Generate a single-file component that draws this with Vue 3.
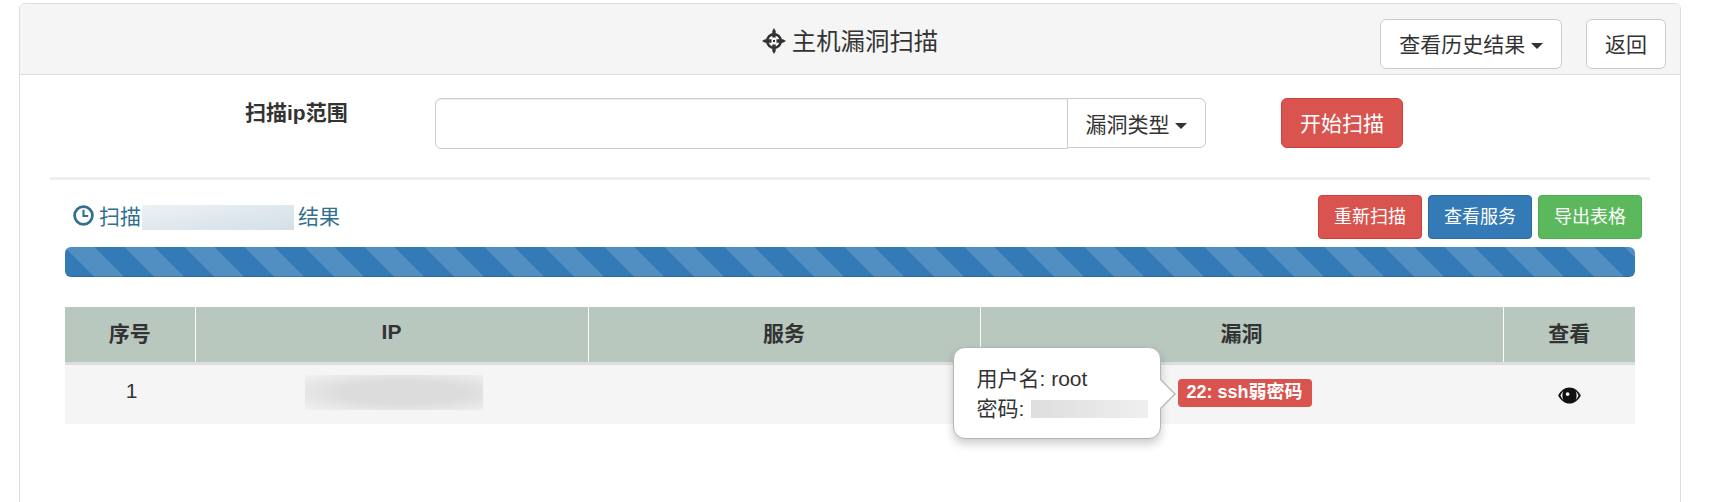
<script setup>
const columns = [
  { key: 'no', label: '序号' },
  { key: 'ip', label: 'IP' },
  { key: 'svc', label: '服务' },
  { key: 'vuln', label: '漏洞' },
  { key: 'view', label: '查看' },
]
</script>

<template>
  <div class="page">
    <section class="panel">
      <header class="panel-head">
        <h1 class="title">
          <svg class="crosshair" viewBox="0 0 24 26" aria-hidden="true">
            <circle cx="12" cy="13" r="6.800" fill="none" stroke="#333" stroke-width="2.600"/>
            <path d="M12 0l1.700 3v6.500h-3.400V3zM12 26l-1.700-3v-6.500h3.400V23zM0 13l3-1.700h6.500v3.400H3zM24 13l-3 1.700h-6.500v-3.400H21z" fill="#333"/>
            <rect x="11" y="12" width="2" height="2" fill="#333"/>
          </svg>
          <span>主机漏洞扫描</span>
        </h1>
        <div class="head-actions">
          <button class="btn btn-default">查看历史结果 <i class="caret"></i></button>
          <button class="btn btn-default">返回</button>
        </div>
      </header>

      <div class="panel-body">
        <form class="scan-form" @submit.prevent>
          <label class="scan-label">扫描ip范围</label>
          <div class="input-group">
            <input class="scan-input" type="text" />
            <button class="addon">漏洞类型 <i class="caret"></i></button>
          </div>
          <button class="btn btn-danger start">开始扫描</button>
        </form>

        <hr class="divider" />

        <div class="result-head">
          <div class="result-title">
            <svg class="clock" viewBox="0 0 20 20" aria-hidden="true">
              <circle cx="10" cy="10" r="8.500" fill="none" stroke="currentColor" stroke-width="2.600"/>
              <path d="M10 4.500v6h4.500" fill="none" stroke="currentColor" stroke-width="2"/>
            </svg>
            <span class="rt">扫描</span><span class="blur-host"></span><span class="rt">结果</span>
          </div>
          <div class="result-actions">
            <button class="btn btn-sm btn-danger">重新扫描</button>
            <button class="btn btn-sm btn-primary">查看服务</button>
            <button class="btn btn-sm btn-success">导出表格</button>
          </div>
        </div>

        <div class="progress"></div>

        <table class="grid">
          <thead>
            <tr>
              <th v-for="c in columns" :key="c.key" :class="'col-' + c.key">{{ c.label }}</th>
            </tr>
          </thead>
          <tbody>
            <tr>
              <td class="no-cell">1</td>
              <td><span class="blur-ip"></span></td>
              <td></td>
              <td class="vuln-cell">
                <span class="label-anchor">
                  <span class="vuln-label">22: ssh弱密码</span>
                  <div class="popover">
                    <div>用户名: root</div>
                    <div class="pw">密码: <span class="blur-pw"></span></div>
                    <i class="arrow"></i>
                  </div>
                </span>
              </td>
              <td>
                <svg class="eye" viewBox="0 0 24 18" aria-hidden="true">
                  <path fill-rule="evenodd" d="M12 .5C6.800.5 2.600 4 0 9c2.600 5 6.800 8.500 12 8.500S21.400 14 24 9C21.400 4 17.200.5 12 .5zM5.500 4.200A8 8 0 0 0 4.500 9a8 8 0 0 0 1 4.600C4.200 12.600 3.200 11 2.400 9c.8-2 1.800-3.700 3.100-4.800zM18.500 4.200C19.800 5.300 20.800 7 21.600 9c-.8 2-1.800 3.600-3.100 4.600a8 8 0 0 0 1-4.600 8 8 0 0 0-1-4.800zM10 5.500a2 2 0 1 0 0 4 2 2 0 0 0 0-4z" fill="#111"/>
                </svg>
              </td>
            </tr>
          </tbody>
        </table>
      </div>
    </section>
  </div>
</template>

<style>
html, body { margin: 0; height: 502px; overflow: hidden; background: #fff; }
</style>

<style scoped>
.page {
  box-sizing: border-box;
  height: 502px;
  overflow: hidden;
  padding: 3px 30px 0 19px;
  font-family: "Liberation Sans", "Noto Sans CJK SC", sans-serif;
  font-size: 21px;
  color: #333;
}
.panel {
  box-sizing: border-box;
  height: 540px;
  border: 1px solid #ddd;
  border-radius: 6px;
  background: #fff;
}
.panel-head {
  position: relative;
  box-sizing: border-box;
  height: 71px;
  display: flex;
  align-items: center;
  justify-content: center;
  background: #f5f5f5;
  border-bottom: 1px solid #ddd;
  border-radius: 5px 5px 0 0;
}
.title {
  margin: 6px 0 0;
  display: flex;
  align-items: center;
  gap: 6px;
  font-size: 24.400px;
  font-weight: 400;
  line-height: 30px;
}
.crosshair { width: 24px; height: 26px; margin-top: -2px; }
.head-actions {
  position: absolute;
  right: 14px;
  top: 15px;
  display: flex;
  gap: 24px;
}
.btn {
  box-sizing: border-box;
  height: 50px;
  padding: 0 18px;
  border: 1px solid #ccc;
  border-radius: 6px;
  font: inherit;
  font-size: 21px;
  line-height: 1;
  white-space: nowrap;
  color: #333;
  background: #fff;
}
.btn-danger { background: #d9534f; border-color: #d43f3a; color: #fff; }
.btn-primary { background: #337ab7; border-color: #2e6da4; color: #fff; }
.btn-success { background: #5cb85c; border-color: #4cae4c; color: #fff; }
.btn-sm {
  width: 104px;
  height: 44px;
  padding: 0;
  font-size: 18px;
  border-radius: 4px;
}
.caret {
  display: inline-block;
  width: 0;
  height: 0;
  vertical-align: middle;
  border-top: 6px solid #333;
  border-left: 6px solid transparent;
  border-right: 6px solid transparent;
}
.panel-body {
  padding: 23px 45px 0 26px;
}
.scan-form {
  display: grid;
  grid-template-columns: 389px 771px 197px;
  align-items: start;
}
.scan-form .start { width: 122px; margin-left: 75px; padding: 0; }
.scan-label {
  padding: 0 0 0 199px;
  font-weight: 700;
  line-height: 30px;
}
.input-group {
  display: flex;
  height: 51px;
  box-sizing: border-box;
}
.scan-input {
  box-sizing: border-box;
  flex: 1;
  min-width: 0;
  height: 51px;
  padding: 0 16px;
  border: 1px solid #ccc;
  border-radius: 6px 0 0 6px;
  outline: none;
  box-shadow: inset 0 1px 1px rgba(0, 0, 0, .075);
}
.addon {
  box-sizing: border-box;
  width: 139px;
  height: 50px;
  margin-left: -1px;
  padding: 0;
  border: 1px solid #ccc;
  border-radius: 0 6px 6px 0;
  background: #fff;
  font: inherit;
  color: #333;
  white-space: nowrap;
}
.divider {
  height: 0;
  margin: 28px -15px 0 4px;
  border: 0;
  border-top: 3px solid #eee;
}
.result-head {
  display: flex;
  align-items: center;
  justify-content: space-between;
  margin: 15px 0 8px;
  padding-left: 27px;
  height: 44px;
}
.result-title {
  display: flex;
  align-items: center;
  color: #31708f;
  font-size: 21px;
  height: 44px;
}
.rt { position: relative; top: -2px; }
.clock { width: 21px; height: 21px; margin-right: 5px; margin-top: -4px; }
.blur-host {
  width: 152px;
  height: 25px;
  margin: 0 4px 0 1px;
  background: linear-gradient(170deg, #edf1f4, #d3dfe8);
}
.result-actions {
  display: flex;
  gap: 6px;
  margin-right: -7px;
}
.progress {
  height: 30px;
  margin-left: 19px;
  border-radius: 6px;
  background-color: #337ab7;
  background-image: linear-gradient(45deg,
    rgba(255,255,255,.15) 25%, transparent 25%,
    transparent 50%, rgba(255,255,255,.15) 50%,
    rgba(255,255,255,.15) 75%, transparent 75%, transparent);
  background-size: 60px 60px;
  box-shadow: inset 0 -1px 0 rgba(0,0,0,.15);
}
.grid {
  width: 1570px;
  margin: 30px 0 0 19px;
  border-collapse: collapse;
  table-layout: fixed;
}
.grid th {
  box-sizing: border-box;
  height: 56px;
  padding: 0 0 5px;
  background: #b8c8be;
  border-bottom: 3px solid #ddd;
  border-left: 1px solid #fff;
  font-size: 21px;
  font-weight: 700;
  text-align: center;
}
.grid th:first-child { border-left: 0; }
.col-no { width: 130px; }
.col-ip { width: 393px; }
.col-svc { width: 392px; }
.col-vuln { width: 523px; }
.col-view { width: 132px; }
.grid td {
  box-sizing: border-box;
  height: 61px;
  padding: 0;
  background: #f5f5f5;
  text-align: center;
  vertical-align: middle;
}
.grid td.no-cell { padding: 0 0 6px 3px; }
.blur-ip {
  display: block;
  width: 178px;
  height: 35px;
  margin: 0 auto;
  transform: translate(2px, -2px);
  background: radial-gradient(ellipse at 55% 50%, #dcdcdc 45%, #f1f1f1 100%);
}
.vuln-cell { position: relative; }
.label-anchor {
  position: relative;
  display: inline-block;
  left: 3px;
  top: -1px;
  vertical-align: middle;
}
.vuln-label {
  display: block;
  box-sizing: border-box;
  width: 134px;
  height: 28px;
  line-height: 26px;
  border-radius: 4px;
  background: #d9534f;
  color: #fff;
  font-size: 18px;
  font-weight: 700;
  white-space: nowrap;
}
.popover {
  position: absolute;
  right: 100%;
  top: -32px;
  box-sizing: border-box;
  width: 208px;
  height: 92px;
  margin-right: 17px;
  padding: 16px 0 0 23px;
  text-align: left;
  line-height: 30px;
  font-size: 21px;
  background: #fff;
  border: 1px solid #b5b5b5;
  border-radius: 12px;
  box-shadow: 0 5px 10px rgba(0,0,0,.2);
}
.pw { display: flex; align-items: center; white-space: pre; }
.blur-pw {
  display: block;
  width: 117px;
  height: 18px;
  margin-left: 1px;
  background: linear-gradient(90deg, #dedede, #efefef);
}
.arrow {
  position: absolute;
  top: 30px;
  right: -16px;
  width: 0;
  height: 0;
  border-top: 16px solid transparent;
  border-bottom: 16px solid transparent;
  border-left: 16px solid #b9b9b9;
}
.arrow::after {
  content: "";
  position: absolute;
  top: -15px;
  left: -17px;
  width: 0;
  height: 0;
  border-top: 15px solid transparent;
  border-bottom: 15px solid transparent;
  border-left: 15px solid #fff;
}
.eye { display: block; width: 23px; height: 17px; margin: 0 auto; transform: translateY(1px); }
</style>
